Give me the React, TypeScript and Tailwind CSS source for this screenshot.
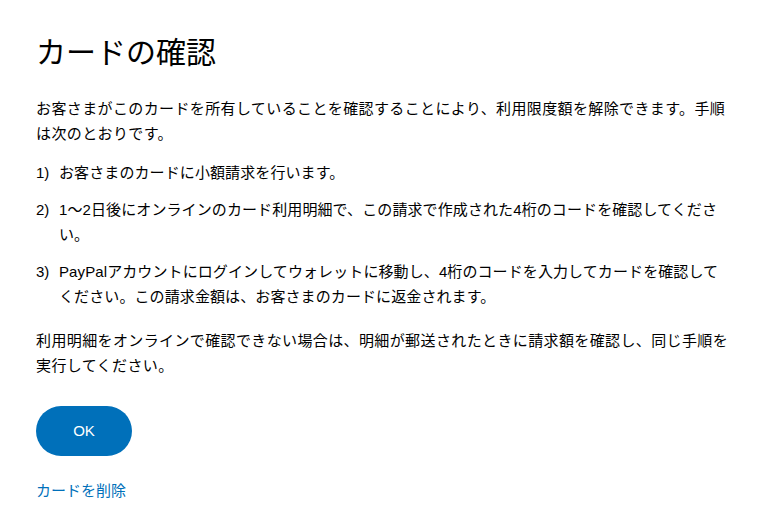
import React from 'react';

const steps = [
  'お客さまのカードに小額請求を行います。',
  '1〜2日後にオンラインのカード利用明細で、この請求で作成された4桁のコードを確認してください。',
  'PayPalアカウントにログインしてウォレットに移動し、4桁のコードを入力してカードを確認してください。この請求金額は、お客さまのカードに返金されます。',
];

const App: React.FC = () => {
  return (
    <div
      className="min-h-screen bg-white px-9 pt-[35px] text-black"
      style={{ fontFamily: '"Liberation Sans", "Noto Sans CJK JP", sans-serif' }}
    >
      <h1 className="text-[30px] leading-[36px] font-normal">カードの確認</h1>

      <p className="mt-[25px] text-[15px] leading-[25px] tracking-[0.38px]">
        お客さまがこのカードを所有していることを確認することにより、利用限度額を解除できます。手順は次のとおりです。
      </p>

      <ol className="mt-[14px] flex flex-col gap-[12px] text-[15px] leading-[25px]">
        {steps.map((step, i) => (
          <li key={i} className="flex">
            <span className="w-[23px] shrink-0">{i + 1})</span>
            <span className="tracking-[0.1px]">{step}</span>
          </li>
        ))}
      </ol>

      <p className="mt-[19px] text-[15px] leading-[25px] tracking-[0.38px]">
        利用明細をオンラインで確認できない場合は、明細が郵送されたときに請求額を確認し、同じ手順を実行してください。
      </p>

      <button className="mt-[28px] h-[50px] w-[96px] rounded-full bg-[#0070ba] text-[15px] text-white">
        OK
      </button>

      <div className="mt-[22px]">
        <a href="#" className="text-[15px] leading-[25px] text-[#0070ba]">
          カードを削除
        </a>
      </div>
    </div>
  );
};

export default App;
